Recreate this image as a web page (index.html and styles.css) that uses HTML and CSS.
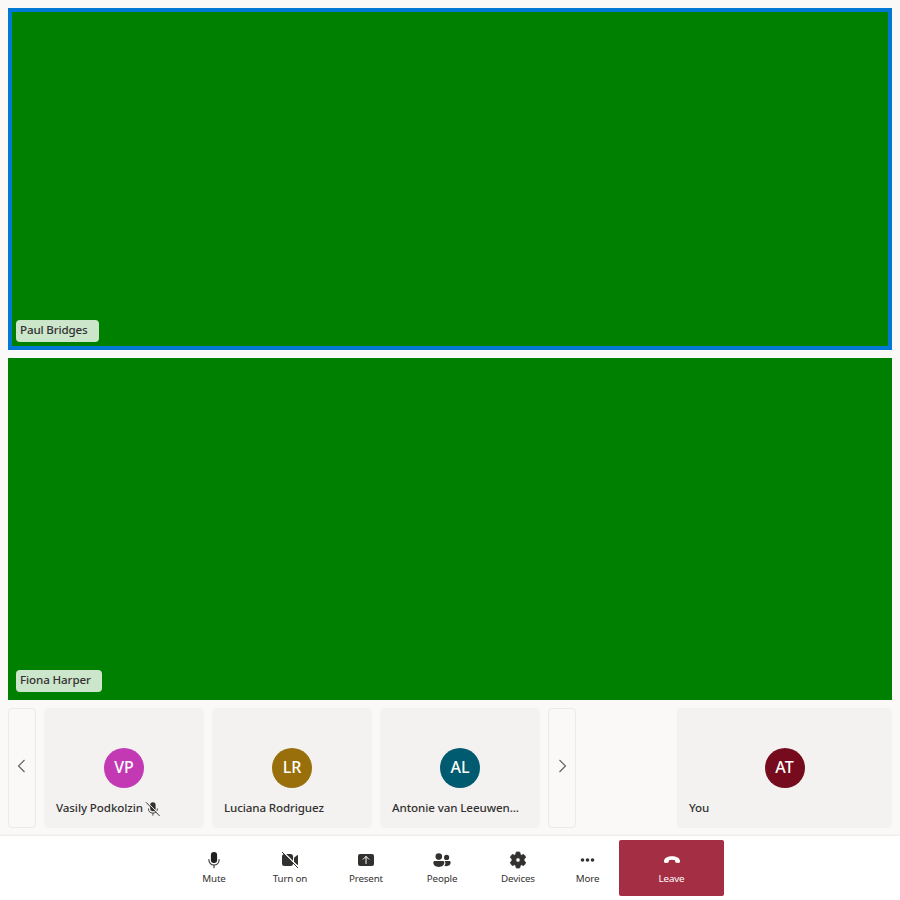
FILE: index.html
```html
<!DOCTYPE html>
<html lang="en">
<head>
<meta charset="utf-8">
<title>Call</title>
<link rel="stylesheet" href="styles.css">
</head>
<body>
<div class="call">
  <main class="stage">
    <section class="video speaking"><span class="label">Paul Bridges</span></section>
    <section class="video"><span class="label label-fiona">Fiona Harper</span></section>
    <div class="strip">
      <button class="page" aria-label="Previous"><svg width="14" height="14" viewBox="0 0 14 14"><path d="M9.5 1 3.5 7l6 6"/></svg></button>
      <article class="tile">
        <div class="avatar magenta">VP</div>
        <div class="name"><span class="vasily">Vasily Podkolzin</span><svg class="muted" width="16" height="16" viewBox="0 0 16 16"><rect x="5.2" y="1.2" width="5.4" height="9" rx="2.7" fill="#323130"/><path d="M3.4 7.5c0 3 1.8 4.6 4.5 4.6s4.5-1.6 4.5-4.6M7.9 12v2.6" fill="none" stroke="#484644"/><path d="M1.7.8 15.2 14.3" stroke="#f3f2f1"/><path d="M1 1.3 14.6 14.9" stroke="#323130"/></svg></div>
      </article>
      <article class="tile">
        <div class="avatar gold">LR</div>
        <div class="name"><span>Luciana Rodriguez</span></div>
      </article>
      <article class="tile">
        <div class="avatar teal">AL</div>
        <div class="name"><span class="antonie">Antonie van Leeuwen...</span></div>
      </article>
      <button class="page" aria-label="Next"><svg width="14" height="14" viewBox="0 0 14 14"><path d="m4.5 1 6 6-6 6"/></svg></button>
      <article class="tile self">
        <div class="avatar wine">AT</div>
        <div class="name"><span>You</span></div>
      </article>
    </div>
  </main>
  <nav class="controls">
    <button class="control"><svg width="20" height="20" viewBox="0 0 20 20"><rect x="6.9" y="2" width="6.2" height="11" rx="3" fill="#201f1e"/><path d="M4.9 9.5v.5c0 3 2.2 5 5.1 5s5.1-2 5.1-5v-.5M10 15v2.8" fill="none" stroke="#323130" stroke-width="1.1" stroke-linecap="round"/></svg><span>Mute</span></button>
    <button class="control"><svg width="20" height="20" viewBox="0 0 20 20"><rect x="2" y="4" width="11" height="12" rx="2.5"/><path d="M14 7.7 17 5.2c.5-.4 1-.1 1 .5v8.6c0 .6-.5.9-1 .5l-3-2.5z"/><path d="M3.3 2 18.7 17.4" stroke="#fff" stroke-width="1.3"/><path d="M2.3 2.3 17.8 17.8" stroke="#323130" stroke-width="1" stroke-linecap="round"/></svg><span>Turn on</span></button>
    <button class="control"><svg width="20" height="20" viewBox="0 0 20 20"><rect x="2" y="4" width="16" height="12" rx="2"/><path d="M10 13.5v-7M7.2 9.2 10 6.4l2.8 2.8" fill="none" stroke="#fff" stroke-width="1" stroke-linecap="round" stroke-linejoin="round"/></svg><span>Present</span></button>
    <button class="control"><svg width="20" height="20" viewBox="0 0 20 20"><circle cx="6.8" cy="6.6" r="3.3"/><circle cx="14.6" cy="7.4" r="2.6"/><path d="M3 11h7.7c1 0 1.6.7 1.6 1.6 0 2.6-2.3 4.3-5.5 4.3s-5.5-1.7-5.5-4.3c0-.9.7-1.6 1.7-1.6z"/><path d="M12.5 11h4.6c.9 0 1.6.7 1.6 1.6 0 2.2-1.9 3.6-4.4 3.6-.7 0-1.4-.1-2-.4 1.2-1.3 1.7-3.2.2-4.8z"/></svg><span>People</span></button>
    <button class="control"><svg width="20" height="20" viewBox="0 0 20 20"><path fill-rule="evenodd" d="M8.2 2.2Q10 1.6 11.8 2.2L12.3 4.5 13.5 5.2 15.7 4.4Q17.1 5.7 17.7 7.5L16 9.1V10.7L17.7 12.3Q17.2 14.2 15.7 15.6L13.5 14.8 12.3 15.5 11.8 17.8Q10 18.4 8.2 17.8L7.7 15.5 6.5 14.8 4.3 15.6Q2.8 14.2 2.3 12.3L4 10.7V9.1L2.3 7.5Q2.9 5.7 4.3 4.4L6.5 5.2 7.7 4.5zM10 7.8a2.2 2.2 0 1 0 0 4.4 2.2 2.2 0 0 0 0-4.4z" stroke="#323130" stroke-width=".8" stroke-linejoin="round"/></svg><span>Devices</span></button>
    <button class="control more"><svg width="20" height="20" viewBox="0 0 20 20"><circle cx="4.5" cy="10" r="1.8"/><circle cx="9.5" cy="10" r="1.8"/><circle cx="14.5" cy="10" r="1.8"/></svg><span>More</span></button>
    <button class="control leave"><svg width="20" height="20" viewBox="0 0 20 20"><path d="M2 10.8C2.4 7.9 5.5 6.2 10 6.2s7.6 1.7 8 4.6c.1 1.1-.3 2.2-1.2 2.2l-2.5-.2c-.8-.1-1.2-.7-1.2-1.5v-1c-1.9-.7-4.3-.7-6.2 0v1c0 .8-.4 1.4-1.2 1.5l-2.5.2c-.9 0-1.3-1.1-1.2-2.2z"/></svg><span>Leave</span></button>
  </nav>
</div>
</body>
</html>
```
FILE: styles.css
```css
* { box-sizing: border-box; }
body {
  margin: 0;
  background: #faf9f8;
  color: #323130;
  font-family: "Noto Sans", sans-serif;
}
button { margin: 0; padding: 0; border: 0; background: none; color: inherit; font: inherit; }
svg { display: block; flex: none; }
.call { height: 900px; display: flex; flex-direction: column; }
.stage { height: 836px; padding: 8px; display: flex; flex-direction: column; gap: 8px; }
.video {
  flex: 1;
  display: flex;
  align-items: flex-end;
  padding: 8px;
  background: #008000;
}
.speaking { box-shadow: inset 0 0 0 4px #0078d4; }
.label {
  width: 83px;
  height: 22px;
  padding-left: 4px;
  border-radius: 4px;
  background: rgba(255, 255, 255, .8);
  font-size: 11.6px;
  font-weight: 500;
  letter-spacing: -.16px;
  line-height: 20px;
  white-space: nowrap;
}
.label-fiona { width: 86px; letter-spacing: -.12px; }
.strip { height: 120px; display: flex; gap: 8px; }
.page {
  width: 28px;
  display: flex;
  align-items: center;
  justify-content: center;
  padding-bottom: 4px;
  border: 1px solid #edebe9;
  border-radius: 4px;
}
.page path { fill: none; stroke: #605e5c; stroke-width: 1.1; }
.tile {
  width: 160px;
  display: flex;
  flex-direction: column;
  align-items: center;
  padding: 40px 12px 0;
  border-radius: 4px;
  background: #f3f2f1;
}
.self { width: 215px; margin-left: auto; }
.avatar {
  width: 40px;
  height: 40px;
  border-radius: 50%;
  color: #fff;
  font-size: 16px;
  font-weight: 500;
  line-height: 39px;
  text-align: center;
}
.magenta { background: #c239b3; }
.gold { background: #986f0b; }
.teal { background: #005b70; }
.wine { background: #750b1c; }
.name {
  align-self: stretch;
  height: 20px;
  margin-top: 10px;
  display: flex;
  gap: 2px;
  font-size: 11.6px;
  font-weight: 500;
  letter-spacing: -.13px;
  line-height: 20px;
  white-space: nowrap;
}
.vasily { width: 87px; letter-spacing: -.1px; }
.antonie { letter-spacing: -.1px; }
.muted { margin-top: 3px; }
.controls {
  height: 64px;
  padding: 4px 0;
  display: flex;
  justify-content: center;
  background: #fff;
  box-shadow: 0 0 3px rgba(0, 0, 0, .13);
}
.control {
  width: 76px;
  height: 56px;
  padding-top: 10px;
  display: flex;
  flex-direction: column;
  align-items: center;
  font-size: 9.8px;
  letter-spacing: -.16px;
  line-height: 16px;
}
.control span { margin-top: 1px; }
.control svg { fill: #323130; }
.more { width: 63px; }
.leave { width: 105px; border-radius: 2px; background: #a42e43; color: #fff; }
.leave svg { fill: #fff; }
```
